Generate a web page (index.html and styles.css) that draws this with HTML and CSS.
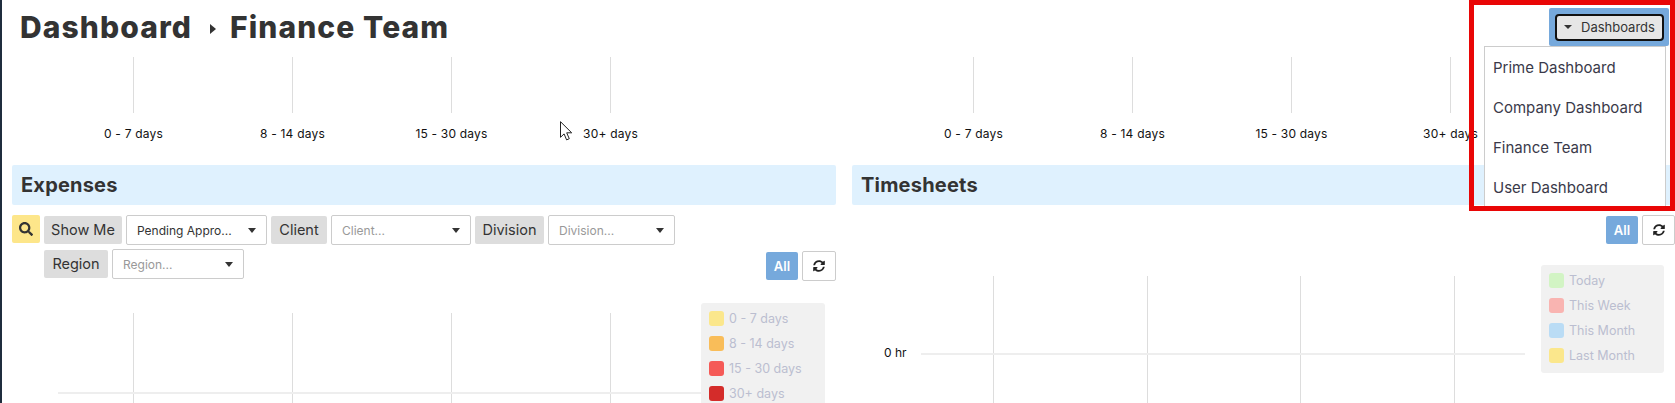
FILE: index.html
```html
<!DOCTYPE html>
<html lang="en">
<head>
  <meta charset="UTF-8">
  <title>Dashboard - Finance Team</title>
  <link rel="stylesheet" href="styles.css">
</head>
<body>
  <div class="page">
    <div class="title-row">
      <h1 class="title">Dashboard</h1>
      <span class="crumb-arrow"></span>
      <h1 class="title">Finance Team</h1>
    </div>

    <div class="columns">
      <!-- expenses -->
      <section class="column">
        <div class="ticks ticks-top">
          <div class="tick"><div class="tick-line"></div><div class="tick-label">0 - 7 days</div></div>
          <div class="tick"><div class="tick-line"></div><div class="tick-label">8 - 14 days</div></div>
          <div class="tick"><div class="tick-line"></div><div class="tick-label">15 - 30 days</div></div>
          <div class="tick"><div class="tick-line"></div><div class="tick-label">30+ days</div></div>
        </div>

        <h2 class="panel-head">Expenses</h2>

        <div class="filters">
          <button class="search-btn">
            <svg class="icon" viewBox="0 0 512 512"><path d="M505 442.7L405.3 343c-4.5-4.5-10.6-7-17-7H372c27.6-35.3 44-79.7 44-128C416 93.1 322.9 0 208 0S0 93.1 0 208s93.1 208 208 208c48.3 0 92.7-16.4 128-44v16.3c0 6.4 2.5 12.5 7 17l99.7 99.7c9.4 9.4 24.6 9.4 33.9 0l28.3-28.3c9.4-9.4 9.4-24.6.1-34zM208 336c-70.7 0-128-57.2-128-128 0-70.7 57.2-128 128-128 70.7 0 128 57.2 128 128 0 70.7-57.2 128-128 128z"/></svg>
          </button>
          <div class="filter-rows">
            <div class="filter-row">
              <span class="chip chip-show">Show Me</span>
              <div class="select select-show"><span class="value">Pending Appro...</span><span class="caret"></span></div>
              <span class="chip chip-client">Client</span>
              <div class="select select-client"><span class="placeholder">Client...</span><span class="caret"></span></div>
              <span class="chip chip-division">Division</span>
              <div class="select select-division"><span class="placeholder">Division...</span><span class="caret"></span></div>
            </div>
            <div class="filter-row filter-row-2">
              <span class="chip chip-region">Region</span>
              <div class="select select-region"><span class="placeholder">Region...</span><span class="caret"></span></div>
              <div class="chart-btns">
                <button class="all-btn">All</button>
                <button class="refresh-btn">
                  <svg class="icon" viewBox="0 0 512 512"><path d="M370.72 133.28C339.458 104.008 298.888 87.962 255.848 88c-77.458.068-144.328 53.178-162.791 126.85-1.344 5.363-6.122 9.15-11.651 9.15H24.103c-7.498 0-13.194-6.807-11.807-14.176C33.933 94.924 134.813 8 256 8c66.448 0 126.791 26.136 171.315 68.685L463.03 40.97C478.149 25.851 504 36.559 504 57.941V192c0 13.255-10.745 24-24 24H345.941c-21.382 0-32.09-25.851-16.971-40.971l41.75-41.749zM32 296h134.059c21.382 0 32.09 25.851 16.971 40.971l-41.75 41.75c31.262 29.273 71.835 45.319 114.876 45.28 77.418-.07 144.315-53.144 162.787-126.849 1.344-5.363 6.122-9.15 11.651-9.15h57.304c7.498 0 13.194 6.807 11.807 14.176C478.067 417.076 377.187 504 256 504c-66.448 0-126.791-26.136-171.315-68.685L48.97 471.03C33.851 486.149 8 475.441 8 454.059V320c0-13.255 10.745-24 24-24z"/></svg>
                </button>
              </div>
            </div>
          </div>
        </div>

        <div class="chart chart-expenses">
          <div class="plot">
            <div class="ticks">
              <div class="tick"><div class="tick-line tall"></div></div>
              <div class="tick"><div class="tick-line tall"></div></div>
              <div class="tick"><div class="tick-line tall"></div></div>
              <div class="tick"><div class="tick-line tall"></div></div>
            </div>
            <div class="axis"></div>
          </div>
          <ul class="legend">
            <li><span class="swatch" style="background:#fbe78c"></span>0 - 7 days</li>
            <li><span class="swatch" style="background:#f9bd59"></span>8 - 14 days</li>
            <li><span class="swatch" style="background:#f55a57"></span>15 - 30 days</li>
            <li><span class="swatch" style="background:#d42c2a"></span>30+ days</li>
          </ul>
        </div>
      </section>

      <!-- timesheets -->
      <section class="column">
        <div class="ticks ticks-top">
          <div class="tick"><div class="tick-line"></div><div class="tick-label">0 - 7 days</div></div>
          <div class="tick"><div class="tick-line"></div><div class="tick-label">8 - 14 days</div></div>
          <div class="tick"><div class="tick-line"></div><div class="tick-label">15 - 30 days</div></div>
          <div class="tick"><div class="tick-line"></div><div class="tick-label">30+ days</div></div>
        </div>

        <h2 class="panel-head">Timesheets</h2>

        <div class="chart-btns chart-btns-right">
          <button class="all-btn">All</button>
          <button class="refresh-btn">
            <svg class="icon" viewBox="0 0 512 512"><path d="M370.72 133.28C339.458 104.008 298.888 87.962 255.848 88c-77.458.068-144.328 53.178-162.791 126.85-1.344 5.363-6.122 9.15-11.651 9.15H24.103c-7.498 0-13.194-6.807-11.807-14.176C33.933 94.924 134.813 8 256 8c66.448 0 126.791 26.136 171.315 68.685L463.03 40.97C478.149 25.851 504 36.559 504 57.941V192c0 13.255-10.745 24-24 24H345.941c-21.382 0-32.09-25.851-16.971-40.971l41.75-41.749zM32 296h134.059c21.382 0 32.09 25.851 16.971 40.971l-41.75 41.75c31.262 29.273 71.835 45.319 114.876 45.28 77.418-.07 144.315-53.144 162.787-126.849 1.344-5.363 6.122-9.15 11.651-9.15h57.304c7.498 0 13.194 6.807 11.807 14.176C478.067 417.076 377.187 504 256 504c-66.448 0-126.791-26.136-171.315-68.685L48.97 471.03C33.851 486.149 8 475.441 8 454.059V320c0-13.255 10.745-24 24-24z"/></svg>
          </button>
        </div>

        <div class="chart chart-timesheets">
          <div class="plot">
            <div class="ticks">
              <div class="tick"><div class="tick-line tall"></div></div>
              <div class="tick"><div class="tick-line tall"></div></div>
              <div class="tick"><div class="tick-line tall"></div></div>
              <div class="tick"><div class="tick-line tall"></div></div>
            </div>
            <div class="axis"></div>
            <span class="axis-label">0 hr</span>
          </div>
          <ul class="legend">
            <li><span class="swatch" style="background:#d2f4c4"></span>Today</li>
            <li><span class="swatch" style="background:#f9b4b1"></span>This Week</li>
            <li><span class="swatch" style="background:#badcf5"></span>This Month</li>
            <li><span class="swatch" style="background:#fbe78c"></span>Last Month</li>
          </ul>
        </div>
      </section>
    </div>

    <!-- dashboards menu, open -->
    <div class="dash-menu">
      <div class="dash-toggle">
        <button class="dash-btn"><span class="caret"></span>Dashboards</button>
      </div>
      <ul class="dash-list">
        <li>Prime Dashboard</li>
        <li>Company Dashboard</li>
        <li>Finance Team</li>
        <li>User Dashboard</li>
      </ul>
    </div>

    <div class="highlight"></div>

    <svg class="cursor" viewBox="0 0 13 20"><path d="M.5.7v15.6l3.6-3.4 2.5 6 2.7-1.2-2.6-5.9h5z" fill="#fff" stroke="#222" stroke-width="1"/></svg>
  </div>
</body>
</html>
```

FILE: styles.css
```css
* {
  box-sizing: border-box;
}

html, body {
  margin: 0;
  height: 100%;
  overflow: hidden;
  background: #fff;
}

body {
  font-family: Inter, 'Noto Sans', sans-serif;
  color: #333;
}

button {
  font-family: inherit;
  padding: 0;
  cursor: pointer;
}

ul {
  list-style: none;
  margin: 0;
  padding: 0;
}

.page {
  position: relative;
  height: 403px;
  padding-left: 10px;
  border-left: 2px solid #1f2d3d;
  overflow: hidden;
}

/* title */
.title-row {
  display: flex;
  align-items: center;
  height: 57px;
  padding: 0 0 3px 8px;
}

.title {
  margin: 0;
  font-size: 30px;
  font-weight: 800;
  letter-spacing: 1.1px;
  color: #333;
}

.crumb-arrow {
  width: 0;
  height: 0;
  margin: 4px 14px 0 18px;
  border-left: 6px solid #333;
  border-top: 5px solid transparent;
  border-bottom: 5px solid transparent;
}

/* columns */
.columns {
  display: grid;
  grid-template-columns: 824px 823px;
  gap: 16px;
}

.ticks {
  display: flex;
  padding-left: 42px;
}

.tick {
  width: 159px;
  flex: none;
}

.tick-line {
  width: 1px;
  height: 56px;
  margin: 0 auto;
  background: #ddd;
}

.tick-line.tall {
  height: 140px;
}

.tick-label {
  margin-top: 13px;
  font-size: 12px;
  line-height: 16px;
  letter-spacing: 0.2px;
  text-align: center;
  color: #111;
}

.panel-head {
  height: 40px;
  margin: 23px 0 0;
  padding-left: 9px;
  font-size: 20px;
  font-weight: 700;
  letter-spacing: 0.2px;
  line-height: 41px;
  color: #333;
  background: #dff1fe;
  border-radius: 2px;
}

/* filters */
.filters {
  display: flex;
  gap: 4px;
  margin-top: 10px;
}

.search-btn {
  width: 28px;
  height: 28px;
  background: #fde68a;
  border: none;
  border-radius: 2px;
  display: flex;
  align-items: center;
  justify-content: center;
}

.icon {
  width: 14px;
  height: 14px;
  fill: #333;
}

.filter-rows {
  flex: 1;
}

.filter-row {
  display: flex;
  align-items: center;
  gap: 4px;
  height: 30px;
}

.filter-row-2 {
  margin-top: 4px;
}

.chip {
  height: 28px;
  padding: 0 4px;
  font-size: 14.5px;
  line-height: 28px;
  text-align: center;
  white-space: nowrap;
  background: #ddd;
  border-radius: 2px;
}

.chip-show { width: 78px; }
.chip-client { width: 56px; }
.chip-division { width: 69px; }
.chip-region { width: 64px; }

.select {
  display: flex;
  align-items: center;
  justify-content: space-between;
  height: 30px;
  padding: 0 10px;
  font-size: 12px;
  background: #fff;
  border: 1px solid #ccc;
  border-radius: 2px;
}

.select-show { width: 141px; }
.select-client { width: 140px; }
.select-division { width: 127px; }
.select-region { width: 132px; }

.value {
  color: #333;
}

.placeholder {
  color: #999;
}

.caret {
  flex: none;
  width: 0;
  height: 0;
  border-top: 5px solid #333;
  border-left: 4px solid transparent;
  border-right: 4px solid transparent;
}

.chart-btns {
  display: flex;
  align-items: center;
  gap: 4px;
  margin-left: auto;
}

.filter-row-2 .chart-btns {
  margin-top: 4px;
}

.chart-btns-right {
  justify-content: flex-end;
  margin-top: 10px;
}

.chart-btns-right .refresh-btn {
  width: 33px;
}

.all-btn {
  width: 32px;
  height: 28px;
  font-size: 13px;
  font-weight: 600;
  color: #fff;
  background: #76a9dc;
  border: none;
  border-radius: 2px;
}

.refresh-btn {
  width: 34px;
  height: 30px;
  background: #fff;
  border: 1px solid #ccc;
  border-radius: 2px;
  display: flex;
  align-items: center;
  justify-content: center;
}

.refresh-btn .icon {
  width: 12px;
  height: 12px;
  fill: #222;
}

/* bottom charts */
.chart {
  display: flex;
}

.plot {
  position: relative;
  flex: none;
}

.axis {
  position: absolute;
  height: 2px;
  background: #eee;
}

.axis-label {
  position: absolute;
  left: 32px;
  top: 80px;
  font-size: 12px;
  line-height: 16px;
  color: #111;
}

.legend {
  flex: none;
  background: #f1f1f1;
  border-radius: 3px;
  padding: 8px 8px 10px;
  font-size: 12.5px;
  line-height: 15px;
  color: #bbbeD0;
  white-space: nowrap;
}

.legend li {
  display: flex;
  align-items: center;
  gap: 5px;
  margin-bottom: 10px;
}

.legend li:last-child {
  margin-bottom: 0;
}

.swatch {
  flex: none;
  width: 15px;
  height: 15px;
  border-radius: 3px;
}

.chart-expenses {
  margin-top: 24px;
}

.chart-expenses .plot {
  width: 689px;
  padding-top: 10px;
}

.chart-expenses .axis {
  left: 46px;
  right: 0;
  top: 89px;
}

.chart-expenses .legend {
  width: 124px;
  height: 120px;
}

.chart-timesheets {
  margin-top: 20px;
}

.chart-timesheets .plot {
  width: 689px;
  padding-top: 11px;
}

.chart-timesheets .ticks {
  padding-left: 65px;
}

.chart-timesheets .tick {
  width: 153.5px;
}

.chart-timesheets .axis {
  left: 69px;
  right: 16px;
  top: 88px;
}

.chart-timesheets .legend {
  width: 123px;
  height: 108px;
}

/* dashboards menu */
.dash-menu {
  position: absolute;
  top: 8px;
  right: 9px;
  width: 182px;
}

.dash-toggle {
  width: 120px;
  height: 38px;
  margin-left: auto;
  margin-right: -3px;
  padding: 6px 5px 5px 6px;
  background: #76a9dc;
  border-radius: 2px;
}

.dash-btn {
  display: flex;
  align-items: center;
  width: 109px;
  height: 27px;
  padding: 0 0 1px 7px;
  font-size: 13px;
  white-space: nowrap;
  color: #333;
  background: #e6e6e6;
  border: 2px solid #111;
  border-radius: 4px;
}

.dash-btn .caret {
  margin-right: 9px;
  border-top-width: 4px;
}

.dash-list {
  height: 163px;
  background: #fff;
  border: 1px solid #ccc;
  padding: 1px 0 0 8px;
  font-size: 15px;
  white-space: nowrap;
  color: #3a3a4a;
}

.dash-list li {
  height: 40px;
  line-height: 40px;
}

/* annotation */
.highlight {
  position: absolute;
  top: 0;
  right: 0;
  width: 206px;
  height: 211px;
  border: 5px solid #e90606;
}

.cursor {
  position: absolute;
  left: 558px;
  top: 121px;
  width: 13px;
  height: 20px;
}
```
